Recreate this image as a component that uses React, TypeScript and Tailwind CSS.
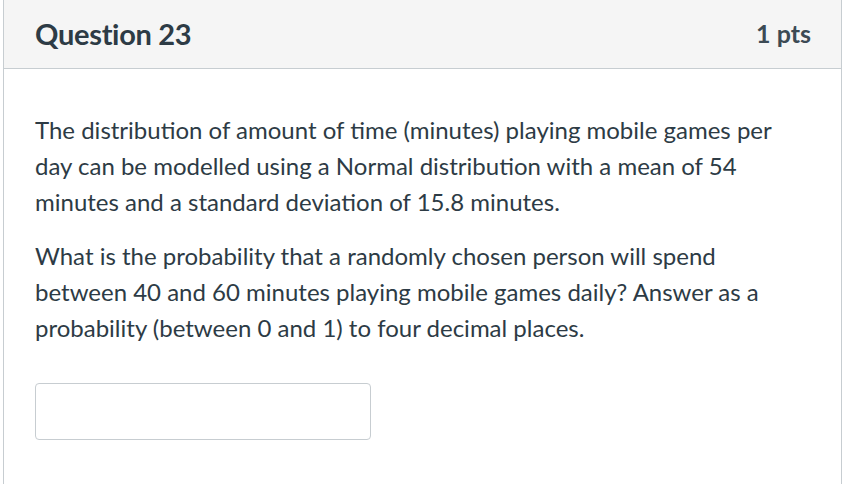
export default function App() {
  return (
    <div className="w-[845px] h-[484px] bg-white overflow-hidden" style={{ fontFamily: 'Lato, "Noto Sans", sans-serif' }}>
      <div className="ml-[3px] w-[839px] h-[484px] border-x border-[#c7cdd1] text-[#2d3b45]">
        <div className="h-[69px] bg-[#f5f5f5] border-b border-[#c7cdd1] flex items-center justify-between pl-[31px] pr-[30px]">
          <div className="text-[29px] font-bold tracking-[-0.3px]">Question 23</div>
          <div className="text-[25px] font-bold text-[#3c4a54]">1 pts</div>
        </div>
        <div className="pl-[31px] pr-[30px] pt-[43px] text-[24px] leading-[36px]">
          <p>The distribution of amount of time (minutes) playing mobile games per day can be modelled using a Normal distribution with a mean of 54 minutes and a standard deviation of 15.8 minutes.</p>
          <p className="mt-[18px]">What is the probability that a randomly chosen person will spend between 40 and 60 minutes playing mobile games daily? Answer as a probability (between 0 and 1) to four decimal places.</p>
          <div className="mt-[37px] w-[336px] h-[57px] border border-[#c7cdd1] rounded-[4px] bg-white"></div>
        </div>
      </div>
    </div>
  );
}
